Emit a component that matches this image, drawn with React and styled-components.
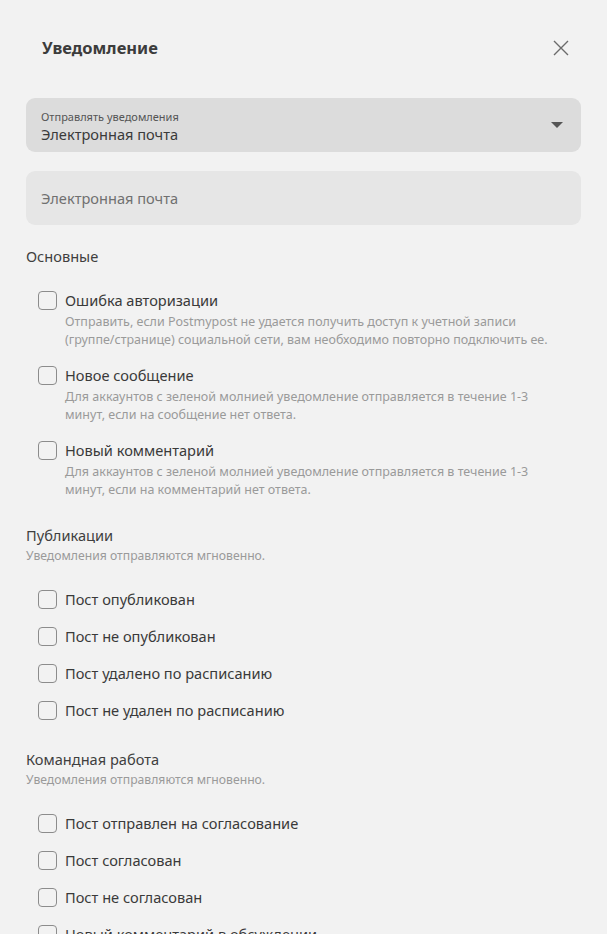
import React from 'react';
import styled, { createGlobalStyle } from 'styled-components';

const Global = createGlobalStyle`
  html, body {
    margin: 0;
    padding: 0;
    background: #f2f2f2;
    font-family: 'Noto Sans', 'Open Sans', sans-serif;
    color: #3a3a3a;
  }
  * { box-sizing: border-box; }
`;

const Panel = styled.div`
  width: 607px;
  height: 934px;
  overflow: hidden;
  background: #f2f2f2;
  padding: 0 26px;
`;

const Header = styled.div`
  display: flex;
  align-items: center;
  justify-content: space-between;
  height: 95px;
  padding: 0 10px 0 16px;
`;

const Title = styled.h2`
  margin: 0;
  font-size: 16.5px;
  font-weight: 700;
  color: #3c3c3c;
`;

const CloseBtn = styled.button`
  border: 0;
  background: none;
  padding: 0;
  width: 20px;
  height: 20px;
  display: flex;
  align-items: center;
  justify-content: center;
  cursor: pointer;
`;

const Field = styled.div`
  display: flex;
  align-items: center;
  height: 54px;
  border-radius: 9px;
  background: ${(p) => (p.$select ? '#dcdcdc' : '#e6e6e6')};
  padding: 0 16px 0 15px;
  margin-top: ${(p) => (p.$select ? '3px' : '19px')};
`;

const FieldText = styled.div`
  flex: 1;
  display: flex;
  flex-direction: column;
`;

const FieldLabel = styled.span`
  font-size: 11px;
  color: #555;
  line-height: 15px;
  margin-top: 2px;
`;

const FieldValue = styled.span`
  font-size: 14.6px;
  line-height: 20px;
  color: ${(p) => (p.$placeholder ? '#707070' : '#3a3a3a')};
`;

const Caret = styled.span`
  width: 0;
  height: 0;
  border-left: 6px solid transparent;
  border-right: 6px solid transparent;
  border-top: 6px solid #555;
  margin-right: 2px;
`;

const Section = styled.section`
  margin-top: ${(p) => p.$top}px;
`;

const SectionTitle = styled.div`
  font-size: 14.6px;
  line-height: 20px;
  color: #3f3f3f;
`;

const SectionSub = styled.div`
  font-size: 12.2px;
  line-height: 18px;
  margin-top: 2px;
  color: #9a9a9a;
`;

const List = styled.div`
  display: flex;
  flex-direction: column;
  gap: ${(p) => p.$gap}px;
  margin-top: ${(p) => p.$top}px;
  padding-left: 12px;
`;

const Item = styled.label`
  display: flex;
  gap: 8px;
  align-items: flex-start;
`;

const Box = styled.span`
  flex: none;
  width: 19px;
  height: 19px;
  border: 1.6px solid #8c8c8c;
  border-radius: 4px;
`;

const ItemText = styled.div`
  display: flex;
  flex-direction: column;
`;

const ItemLabel = styled.span`
  font-size: 14.6px;
  line-height: 19px;
  color: #3a3a3a;
`;

const ItemDesc = styled.span`
  font-size: 12.5px;
  line-height: 18px;
  color: #9a9a9a;
  margin-top: 3px;
`;

function Check({ label, desc }) {
  return (
    <Item>
      <Box />
      <ItemText>
        <ItemLabel>{label}</ItemLabel>
        {desc && <ItemDesc>{desc}</ItemDesc>}
      </ItemText>
    </Item>
  );
}

const basic = [
  {
    label: 'Ошибка авторизации',
    desc: (
      <>
        Отправить, если Postmypost не удается получить доступ к учетной записи
        <br />
        (группе/странице) социальной сети, вам необходимо повторно подключить ее.
      </>
    ),
  },
  {
    label: 'Новое сообщение',
    desc: (
      <>
        Для аккаунтов с зеленой молнией уведомление отправляется в течение 1-3
        <br />
        минут, если на сообщение нет ответа.
      </>
    ),
  },
  {
    label: 'Новый комментарий',
    desc: (
      <>
        Для аккаунтов с зеленой молнией уведомление отправляется в течение 1-3
        <br />
        минут, если на комментарий нет ответа.
      </>
    ),
  },
];

const posts = [
  'Пост опубликован',
  'Пост не опубликован',
  'Пост удалено по расписанию',
  'Пост не удален по расписанию',
];

const team = [
  'Пост отправлен на согласование',
  'Пост согласован',
  'Пост не согласован',
  'Новый комментарий в обсуждении',
];

export default function App() {
  return (
    <Panel>
      <Global />
      <Header>
        <Title>Уведомление</Title>
        <CloseBtn aria-label='close'>
          <svg width='16' height='16' viewBox='0 0 16 16'>
            <path d='M1 1L15 15M15 1L1 15' stroke='#6b6b6b' strokeWidth='1.4' fill='none' />
          </svg>
        </CloseBtn>
      </Header>

      <Field $select>
        <FieldText>
          <FieldLabel>Отправлять уведомления</FieldLabel>
          <FieldValue>Электронная почта</FieldValue>
        </FieldText>
        <Caret />
      </Field>

      <Field>
        <FieldText>
          <FieldValue $placeholder>Электронная почта</FieldValue>
        </FieldText>
      </Field>

      <Section $top={21}>
        <SectionTitle>Основные</SectionTitle>
        <List $gap={17} $top={25}>
          {basic.map((it) => (
            <Check key={it.label} label={it.label} desc={it.desc} />
          ))}
        </List>
      </Section>

      <Section $top={26}>
        <SectionTitle>Публикации</SectionTitle>
        <SectionSub>Уведомления отправляются мгновенно.</SectionSub>
        <List $gap={18} $top={25}>
          {posts.map((p) => (
            <Check key={p} label={p} />
          ))}
        </List>
      </Section>

      <Section $top={29}>
        <SectionTitle>Командная работа</SectionTitle>
        <SectionSub>Уведомления отправляются мгновенно.</SectionSub>
        <List $gap={18} $top={25}>
          {team.map((p) => (
            <Check key={p} label={p} />
          ))}
        </List>
      </Section>
    </Panel>
  );
}
